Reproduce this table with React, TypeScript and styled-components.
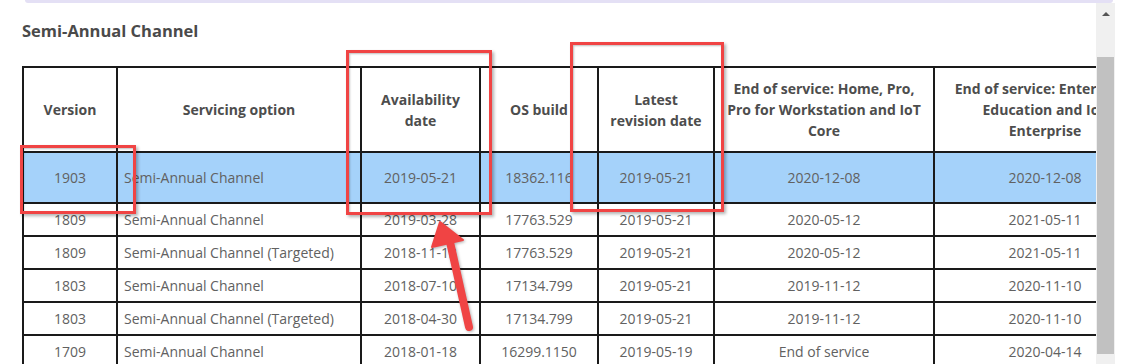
import React from "react";
import styled, { createGlobalStyle } from "styled-components";

const Global = createGlobalStyle`
  html, body { margin: 0; padding: 0; background: #ffffff; }
  body { font-family: "Open Sans", "Noto Sans", "Liberation Sans", sans-serif; }
`;

const Page = styled.div`
  position: relative;
  width: 1121px;
  height: 364px;
  overflow: hidden;
  background: #ffffff;
`;

const TopBand = styled.div`
  height: 3px;
  margin: 0 8px 0 25px;
  background: #e4e0f5;
  border-radius: 0 0 6px 6px;
`;

const Body = styled.div`
  display: flex;
  height: 361px;
`;

const Content = styled.div`
  width: 1096px;
  flex: none;
  overflow: hidden;
  padding-left: 22px;
  box-sizing: border-box;
`;

const Title = styled.h3`
  margin: 16px 0 23px;
  font-size: 16.5px;
  line-height: 24px;
  font-weight: 700;
  color: #4a4a4a;
  white-space: nowrap;
`;

const Table = styled.table`
  border-collapse: collapse;
  table-layout: fixed;
  width: 1133px;
  font-size: 14px;
  color: #616161;
`;

const HeadRow = styled.tr`
  height: 85px;
`;

const Row = styled.tr<{ $hl?: boolean; $h: number }>`
  height: ${(p) => p.$h}px;
  background: ${(p) => (p.$hl ? "#a5d2fa" : "#ffffff")};
`;

const Th = styled.th<{ $pad?: number }>`
  border: 2px solid #1a1a1a;
  padding: 0 ${(p) => p.$pad ?? 6}px;
  font-weight: 700;
  color: #4d4d4d;
  line-height: 21px;
  text-align: center;
  vertical-align: middle;
`;

const Td = styled.td<{ $left?: boolean }>`
  border: 2px solid #1a1a1a;
  padding: 0 6px;
  line-height: 21px;
  text-align: ${(p) => (p.$left ? "left" : "center")};
  vertical-align: middle;
  white-space: nowrap;
  overflow: hidden;
`;

const Scrollbar = styled.div`
  width: 19px;
  flex: none;
  background: #f0f0f0;
  display: flex;
  flex-direction: column;
  align-items: center;
`;

const ArrowUp = styled.div`
  margin-top: 9px;
  width: 0;
  height: 0;
  border-left: 4px solid transparent;
  border-right: 4px solid transparent;
  border-bottom: 4px solid #555555;
`;

const Thumb = styled.div`
  margin-top: 41px;
  width: 17px;
  height: 297px;
  background: #c1c1c1;
`;

const Gap = styled.div`
  width: 6px;
  flex: none;
`;

const RedBox = styled.div<{ $x: number; $y: number; $w: number; $h: number }>`
  position: absolute;
  left: ${(p) => p.$x}px;
  top: ${(p) => p.$y}px;
  width: ${(p) => p.$w}px;
  height: ${(p) => p.$h}px;
  box-sizing: border-box;
  border: 3px solid #f04444;
  box-shadow: 2px 2px 3px rgba(0, 0, 0, 0.3), inset 1px 1px 2px rgba(0, 0, 0, 0.25);
  pointer-events: none;
`;

const ArrowSvg = styled.svg`
  position: absolute;
  left: 0;
  top: 0;
  pointer-events: none;
  filter: drop-shadow(1px 1px 1.5px rgba(0, 0, 0, 0.3));
`;

const widths = [94, 244, 119, 118, 116, 220, 222];

const headers = [
  "Version",
  "Servicing option",
  "Availability date",
  "OS build",
  "Latest revision date",
  "End of service: Home, Pro, Pro for Workstation and IoT Core",
  "End of service: Enterprise, Education and IoT Enterprise",
];

const rows: string[][] = [
  ["1903", "Semi-Annual Channel", "2019-05-21", "18362.116", "2019-05-21", "2020-12-08", "2020-12-08"],
  ["1809", "Semi-Annual Channel", "2019-03-28", "17763.529", "2019-05-21", "2020-05-12", "2021-05-11"],
  ["1809", "Semi-Annual Channel (Targeted)", "2018-11-13", "17763.529", "2019-05-21", "2020-05-12", "2021-05-11"],
  ["1803", "Semi-Annual Channel", "2018-07-10", "17134.799", "2019-05-21", "2019-11-12", "2020-11-10"],
  ["1803", "Semi-Annual Channel (Targeted)", "2018-04-30", "17134.799", "2019-05-21", "2019-11-12", "2020-11-10"],
  ["1709", "Semi-Annual Channel", "2018-01-18", "16299.1150", "2019-05-19", "End of service", "2020-04-14"],
];

export default function App() {
  return (
    <Page>
      <Global />
      <TopBand />
      <Body>
        <Content>
          <Title>Semi-Annual Channel</Title>
          <Table>
            <colgroup>
              {widths.map((w, i) => (
                <col key={i} style={{ width: w }} />
              ))}
            </colgroup>
            <thead>
              <HeadRow>
                {headers.map((h, i) => (
                  <Th key={h} $pad={i === 6 ? 15 : 6}>
                    {h}
                  </Th>
                ))}
              </HeadRow>
            </thead>
            <tbody>
              {rows.map((r, i) => (
                <Row key={i} $hl={i === 0} $h={i === 0 ? 51 : 33}>
                  {r.map((c, j) => (
                    <Td key={j} $left={j === 1}>
                      {c}
                    </Td>
                  ))}
                </Row>
              ))}
            </tbody>
          </Table>
        </Content>
        <Scrollbar>
          <ArrowUp />
          <Thumb />
        </Scrollbar>
        <Gap />
      </Body>
      <RedBox $x={20} $y={145} $w={116} $h={69} />
      <RedBox $x={346} $y={50} $w={146} $h={165} />
      <RedBox $x={570} $y={42} $w={154} $h={170} />
      <ArrowSvg width={1121} height={364} viewBox="0 0 1121 364">
        <line x1={450} y1={242} x2={469} y2={327} stroke="#f04444" strokeWidth={8} strokeLinecap="round" />
        <polygon points="440,222 432,247 463,240" fill="#f04444" stroke="#f04444" strokeWidth={2} strokeLinejoin="round" />
      </ArrowSvg>
    </Page>
  );
}
